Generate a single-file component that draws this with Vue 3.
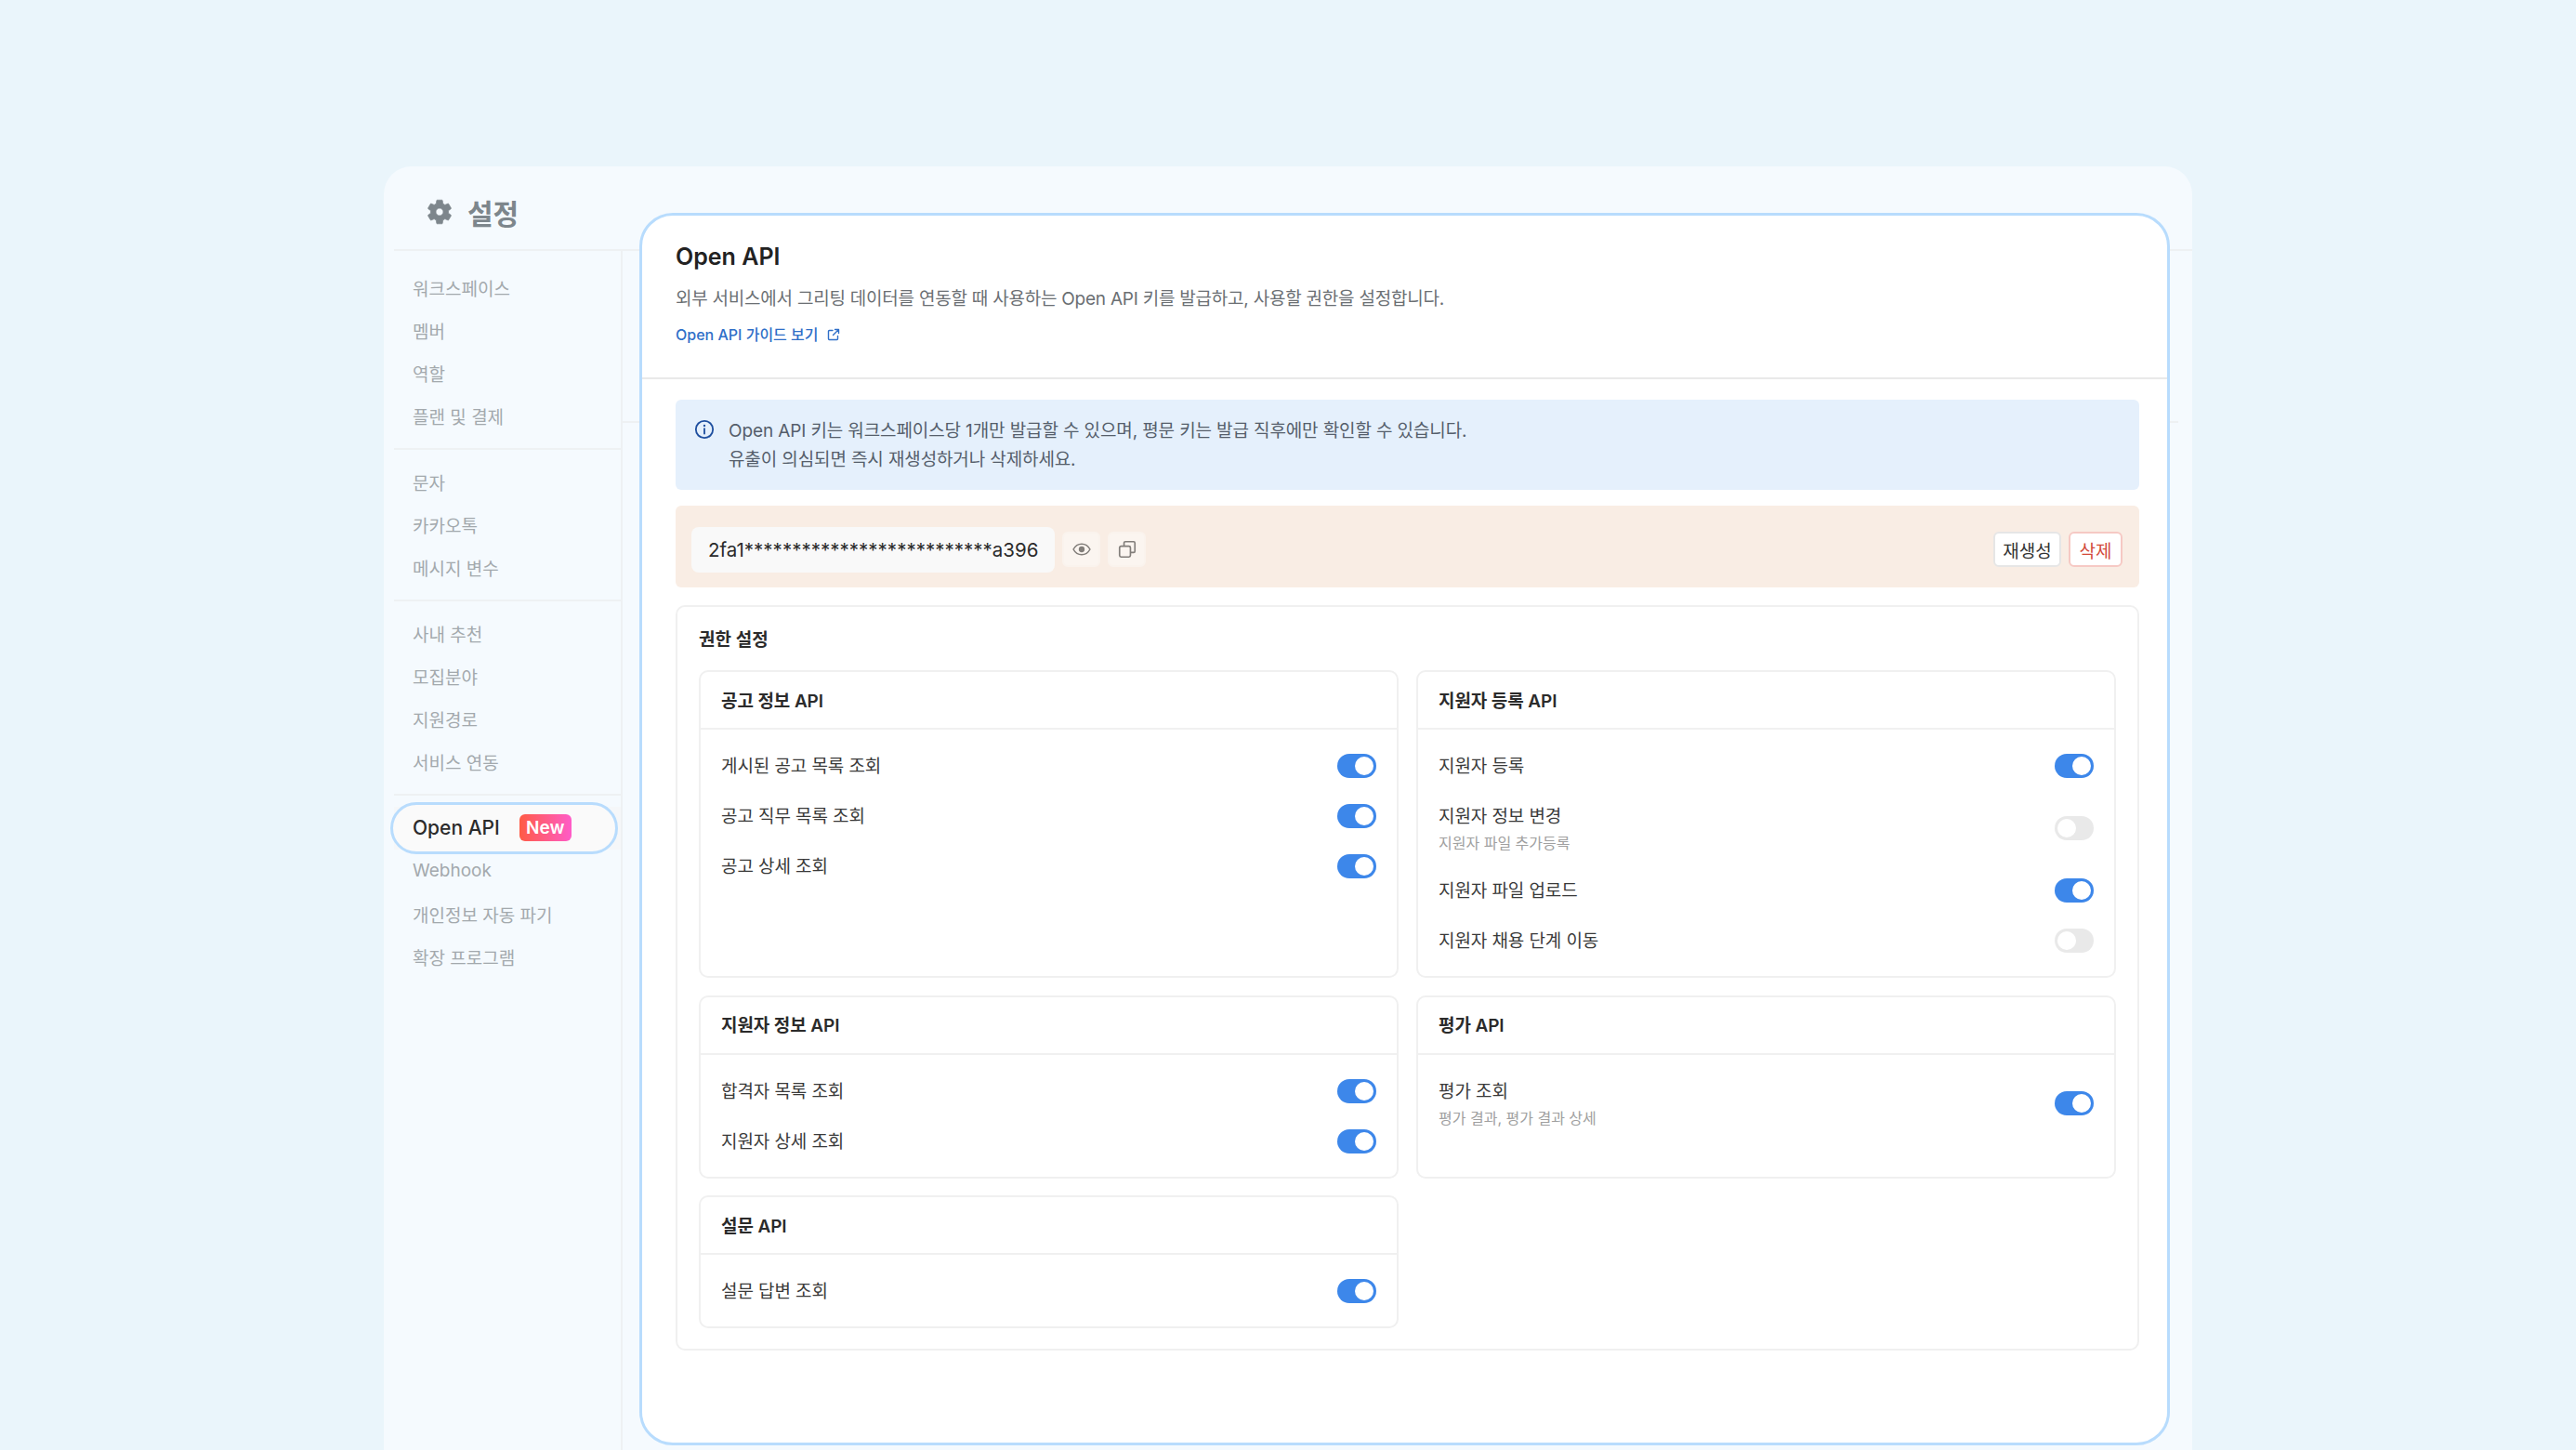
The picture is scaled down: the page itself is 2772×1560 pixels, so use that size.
<template>
  <div class="page">
    <div class="window">
      <div class="top">
        <svg class="gear" viewBox="0 0 24 24"><path fill-rule="evenodd" d="M19.14 12.94c.04-.3.06-.61.06-.94 0-.32-.02-.64-.07-.94l2.03-1.58a.49.49 0 0 0 .12-.61l-1.92-3.32a.488.488 0 0 0-.59-.22l-2.39.96c-.5-.38-1.03-.7-1.62-.94l-.36-2.54a.484.484 0 0 0-.48-.41h-3.84c-.24 0-.43.17-.47.41l-.36 2.54c-.59.24-1.13.57-1.62.94l-2.39-.96c-.22-.08-.47 0-.59.22L2.74 8.87c-.12.21-.08.47.12.61l2.03 1.58c-.05.3-.09.63-.09.94s.02.64.07.94l-2.03 1.58a.49.49 0 0 0-.12.61l1.92 3.32c.12.22.37.29.59.22l2.39-.96c.5.38 1.03.7 1.62.94l.36 2.54c.05.24.24.41.48.41h3.84c.24 0 .44-.17.47-.41l.36-2.54c.59-.24 1.13-.56 1.62-.94l2.39.96c.22.08.47 0 .59-.22l1.92-3.32c.12-.22.07-.47-.12-.61l-2.01-1.58zM12 15c-1.65 0-3-1.35-3-3s1.35-3 3-3 3 1.35 3 3-1.35 3-3 3z"/></svg>
        <span class="top-title">설정</span>
      </div>
      <div class="body">
        <nav class="side">
          <div v-for="(group, g) in menu" :key="g" class="group">
            <div
              v-for="item in group"
              :key="item"
              class="item"
              :class="{ active: item === 'Open API' }"
            >
              <span>{{ item }}</span>
              <span v-if="item === 'Open API'" class="new">New</span>
            </div>
          </div>
        </nav>
        <div class="under">
          <div class="under-head"></div>
        </div>
      </div>

      <!-- 강조된 콘텐츠 카드 -->
      <section class="card">
        <header class="head">
          <h1>Open API</h1>
          <p class="desc">외부 서비스에서 그리팅 데이터를 연동할 때 사용하는 Open API 키를 발급하고, 사용할 권한을 설정합니다.</p>
          <a class="guide">
            Open API 가이드 보기
            <svg viewBox="0 0 16 16" fill="none" stroke="currentColor" stroke-width="1.400" stroke-linecap="round" stroke-linejoin="round"><path d="M7 3.500H3.500a1 1 0 0 0-1 1v8a1 1 0 0 0 1 1h8a1 1 0 0 0 1-1V9.500"/><path d="M9.500 2.500h4v4M13.500 2.500 7.500 8.500"/></svg>
          </a>
        </header>
        <div class="content">
          <div class="info">
            <svg viewBox="0 0 24 24" fill="none" stroke="currentColor" stroke-width="2"><circle cx="12" cy="12" r="10"/><path d="M12 11v6" stroke-linecap="round"/><circle cx="12" cy="7.500" r="1.300" fill="currentColor" stroke="none"/></svg>
            <p>Open API 키는 워크스페이스당 1개만 발급할 수 있으며, 평문 키는 발급 직후에만 확인할 수 있습니다.<br />유출이 의심되면 즉시 재생성하거나 삭제하세요.</p>
          </div>
          <div class="key">
            <div class="key-value">2fa1**************************a396</div>
            <button class="icon-btn">
              <svg viewBox="0 0 16 16" fill="none" stroke="currentColor" stroke-width="1.100"><path d="M1.500 8C3 5.200 5.300 3.800 8 3.800s5 1.400 6.500 4.200C13 10.800 10.700 12.200 8 12.200S3 10.800 1.500 8z"/><circle cx="8" cy="8" r="2.300" fill="currentColor" stroke="none"/></svg>
            </button>
            <button class="icon-btn">
              <svg viewBox="0 0 16 16" fill="none" stroke="currentColor" stroke-width="1.200" stroke-linejoin="round"><rect x="2" y="5.500" width="8.500" height="8.500" rx="1.200"/><path d="M5.500 5.500V3a1 1 0 0 1 1-1H13a1 1 0 0 1 1 1v6.500a1 1 0 0 1-1 1h-2.500"/></svg>
            </button>
            <button class="btn regen">재생성</button>
            <button class="btn del">삭제</button>
          </div>
          <div class="perm">
            <h2>권한 설정</h2>
            <div class="grid">
              <div v-for="api in apis" :key="api.title" class="api">
                <div class="api-title">{{ api.title }}</div>
                <div class="rows">
                  <div v-for="row in api.rows" :key="row.label" class="row">
                    <div>
                      <div class="label">{{ row.label }}</div>
                      <div v-if="row.sub" class="sub">{{ row.sub }}</div>
                    </div>
                    <span class="toggle" :class="{ off: row.off }"><i></i></span>
                  </div>
                </div>
              </div>
            </div>
          </div>
        </div>
      </section>
    </div>
  </div>
</template>

<script setup>
const menu = [
  ["워크스페이스", "멤버", "역할", "플랜 및 결제"],
  ["문자", "카카오톡", "메시지 변수"],
  ["사내 추천", "모집분야", "지원경로", "서비스 연동"],
  ["Open API", "Webhook", "개인정보 자동 파기", "확장 프로그램"],
];

const apis = [
  {
    title: "공고 정보 API",
    rows: [
      { label: "게시된 공고 목록 조회" },
      { label: "공고 직무 목록 조회" },
      { label: "공고 상세 조회" },
    ],
  },
  {
    title: "지원자 등록 API",
    rows: [
      { label: "지원자 등록" },
      { label: "지원자 정보 변경", sub: "지원자 파일 추가등록", off: true },
      { label: "지원자 파일 업로드" },
      { label: "지원자 채용 단계 이동", off: true },
    ],
  },
  {
    title: "지원자 정보 API",
    rows: [{ label: "합격자 목록 조회" }, { label: "지원자 상세 조회" }],
  },
  {
    title: "평가 API",
    rows: [{ label: "평가 조회", sub: "평가 결과, 평가 결과 상세" }],
  },
  {
    title: "설문 API",
    rows: [{ label: "설문 답변 조회" }],
  },
];
</script>

<style>
html,
body {
  margin: 0;
  background: #eaf5fb;
}
</style>

<style scoped>
.page {
  height: 1560px;
  overflow: hidden;
  padding-top: 179px;
  box-sizing: border-box;
  font-family: Inter, "Noto Sans CJK KR", sans-serif;
  color: #222;
}

.window {
  position: relative;
  width: 1946px;
  height: 1381px;
  margin: 0 auto;
  background: #f5fafe;
  border-radius: 30px 30px 0 0;
  overflow: hidden;
}

.top {
  height: 80px;
  margin-left: 11px;
  padding: 9px 0 0 33px;
  display: flex;
  align-items: center;
  gap: 14px;
  border-bottom: 2px solid #eef1f3;
}

.gear {
  width: 32px;
  height: 32px;
  fill: #7d868c;
  stroke: #7d868c;
  stroke-width: 0.5;
}

.top-title {
  font-size: 30px;
  font-weight: 600;
  color: #7d868c;
}

.body {
  display: flex;
  height: 1290px;
}

.side {
  width: 257px;
  box-sizing: border-box;
  padding: 16px 0 0 11px;
  border-right: 2px solid #eef1f3;
}

.group {
  padding-bottom: 11px;
  margin-bottom: 11.5px;
  border-bottom: 2px solid #eef1f3;
}

.group:last-child {
  border-bottom: 0;
}

.item {
  position: relative;
  height: 46.2px;
  padding-left: 20px;
  display: flex;
  align-items: center;
  gap: 21px;
  font-size: 19px;
  color: #a3a9ad;
}

.item.active {
  font-size: 21px;
  font-weight: 500;
  color: #2b2b2b;
  background: #f5f7f9;
}

.item.active::before {
  content: "";
  position: absolute;
  left: -4px;
  right: 3px;
  top: -5px;
  bottom: -5px;
  background: #fafafa;
  border: 3px solid #b8dcfd;
  border-radius: 28px;
}

.item.active span {
  position: relative;
}

.new {
  width: 56px;
  height: 29px;
  display: flex;
  align-items: center;
  justify-content: center;
  border-radius: 6px;
  background: linear-gradient(90deg, #ff5b45, #ff5cc8);
  color: #fff;
  font-size: 19px;
  font-weight: 600;
}

.under {
  flex: 1;
}

.under-head {
  height: 183px;
  margin-right: 15px;
  border-bottom: 2px solid #eef1f3;
}

.card {
  position: absolute;
  left: 275px;
  top: 50px;
  width: 1647px;
  height: 1326px;
  box-sizing: border-box;
  background: #fff;
  border: 3px solid #b8dcfd;
  border-radius: 36px;
  overflow: hidden;
}

.head {
  height: 176px;
  box-sizing: border-box;
  padding: 26px 36px 0;
  border-bottom: 2px solid #e9e9e9;
}

h1 {
  margin: 0;
  height: 36px;
  line-height: 36px;
  font-size: 25px;
  font-weight: 600;
  color: #222;
}

.desc {
  margin: 12px 0 0;
  line-height: 32px;
  font-size: 19px;
  letter-spacing: -0.23px;
  color: #6b6f73;
}

.guide {
  margin-top: 8px;
  display: flex;
  align-items: center;
  gap: 8px;
  line-height: 28px;
  font-size: 16px;
  font-weight: 500;
  color: #2f6fc8;
}

.guide svg {
  width: 16px;
  height: 16px;
}

.content {
  padding: 22px 30px 0 36px;
}

.info {
  height: 97px;
  box-sizing: border-box;
  padding: 18px 0 0 20px;
  display: flex;
  gap: 15px;
  background: #e5f0fc;
  border-radius: 6px;
  color: #1f4f9f;
}

.info svg {
  width: 22px;
  height: 22px;
  margin-top: 3px;
}

.info p {
  margin: 0;
  line-height: 31px;
  font-size: 19px;
  letter-spacing: -0.12px;
  color: #555e6b;
}

.key {
  height: 88px;
  box-sizing: border-box;
  margin-top: 17px;
  padding: 6px 18px 0 17px;
  display: flex;
  align-items: center;
  gap: 8px;
  background: #f9ede4;
  border-radius: 6px;
}

.key-value {
  width: 391px;
  height: 49px;
  box-sizing: border-box;
  padding-left: 18px;
  display: flex;
  align-items: center;
  background: #f9f9f9;
  border-radius: 8px;
  font-size: 20.5px;
  color: #2b2b2b;
}

.icon-btn {
  width: 41px;
  height: 38px;
  padding: 0;
  display: flex;
  align-items: center;
  justify-content: center;
  background: #fbf5f0;
  border: 2px solid #faf3ed;
  border-radius: 6px;
  color: #827e7a;
}

.icon-btn svg {
  width: 22px;
  height: 22px;
}

.btn {
  height: 38px;
  box-sizing: border-box;
  padding: 0;
  background: #fff;
  border: 2px solid #e6e6e6;
  border-radius: 6px;
  font-family: inherit;
  font-size: 19px;
  color: #333;
}

.regen {
  width: 73px;
  margin-left: auto;
}

.del {
  width: 58px;
  border-color: #f6c9c4;
  color: #d2493a;
}

.perm {
  margin-top: 19px;
  padding: 19px 23px 24px;
  height: 802px;
  box-sizing: border-box;
  border: 2px solid #f0f0f0;
  border-radius: 10px;
}

h2 {
  margin: 0;
  line-height: 34px;
  font-size: 19px;
  font-weight: 600;
  color: #2b2b2b;
}

.grid {
  margin-top: 15px;
  display: grid;
  grid-template-columns: 1fr 1fr;
  gap: 18.5px 19px;
}

.api {
  border: 2px solid #f0f0f0;
  border-radius: 10px;
}

.api-title {
  height: 58px;
  padding: 0 0 2px 22px;
  display: flex;
  align-items: center;
  border-bottom: 2px solid #f0f0f0;
  font-size: 19px;
  font-weight: 600;
  letter-spacing: -0.1px;
  color: #2b2b2b;
}

.rows {
  padding: 26px 22px 25px;
  display: flex;
  flex-direction: column;
  gap: 28px;
}

.row {
  display: flex;
  align-items: center;
  justify-content: space-between;
}

.label {
  padding-top: 1px;
  line-height: 25px;
  font-size: 19px;
  letter-spacing: -0.1px;
  color: #3a3a3a;
}

.sub {
  margin-top: 6px;
  line-height: 20px;
  font-size: 16px;
  color: #a0a0a0;
}

.toggle {
  width: 42px;
  height: 26px;
  box-sizing: border-box;
  padding: 3px;
  display: flex;
  justify-content: flex-end;
  background: #3d87ea;
  border-radius: 13px;
}

.toggle i {
  width: 20px;
  height: 20px;
  background: #fff;
  border-radius: 50%;
}

.toggle.off {
  justify-content: flex-start;
  background: #e9e9e9;
}
</style>
